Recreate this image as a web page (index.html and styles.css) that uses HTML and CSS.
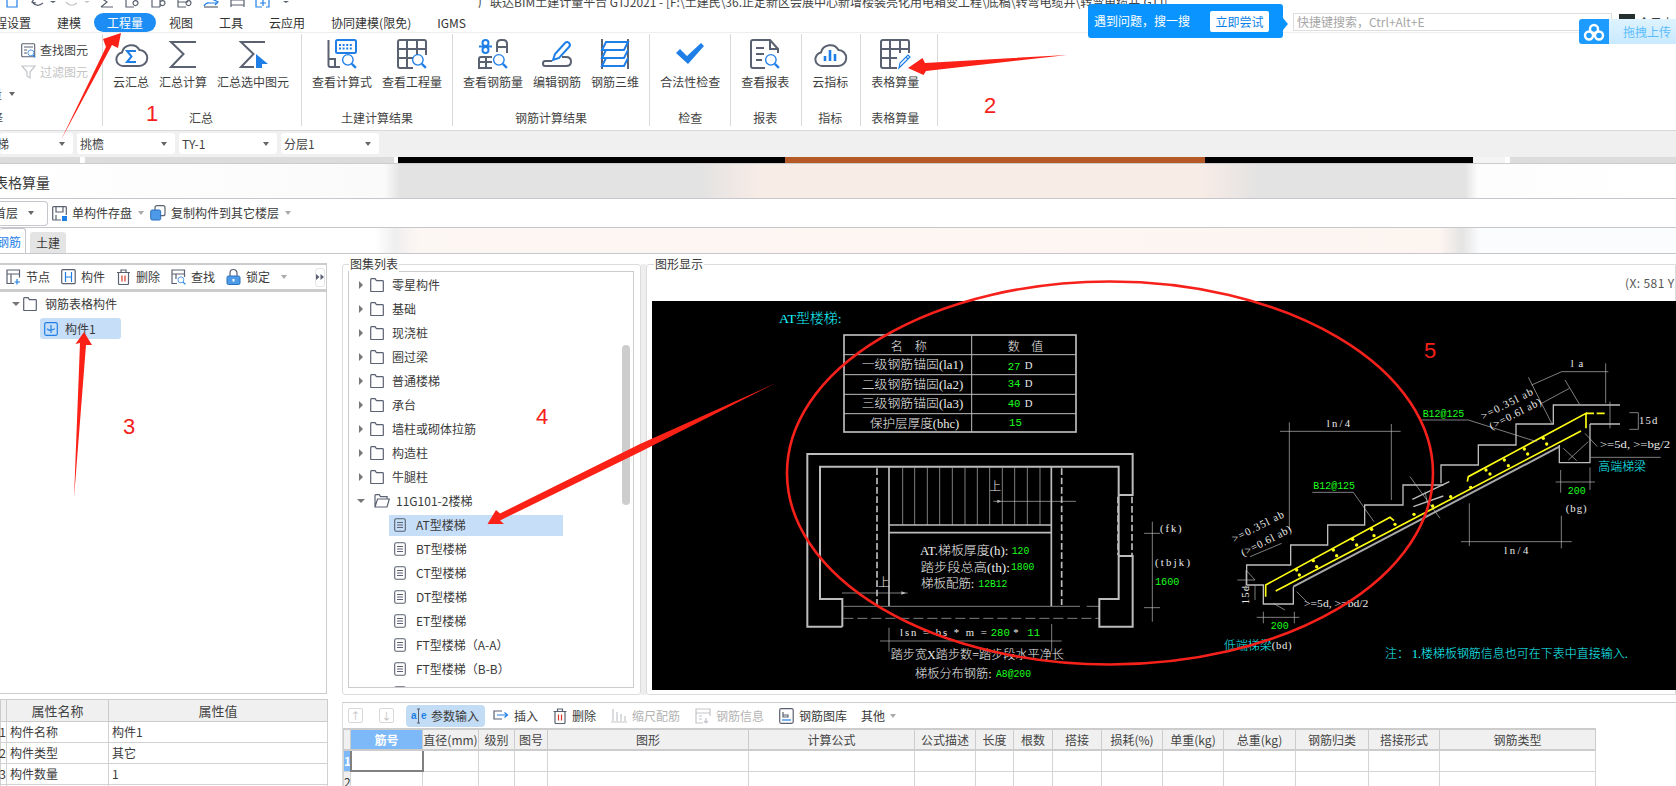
FILE: index.html
```html
<!DOCTYPE html>
<html lang="zh-CN">
<head>
<meta charset="utf-8">
<title>表格算量</title>
<link rel="stylesheet" href="styles.css">
</head>
<body>
<svg class="defs" width="0" height="0" aria-hidden="true">
  <symbol id="mag" viewBox="0 0 14 14"><circle cx="6" cy="6" r="4.6" class="b"/><path d="M9.5 9.5L13 13" class="b b2"/></symbol>
  <symbol id="folder" viewBox="0 0 14 14"><path d="M.7 13V1.5q0-.8.8-.8h3.6l1.3 2h6.1q.8 0 .8.8V13q0 .5-.8.5H1.5q-.8 0-.8-.5z" class="d"/></symbol>
  <symbol id="folderopen" viewBox="0 0 16 14"><path d="M1 13V1.5q0-.8.8-.8h3.4l1.3 2h6.6v2.2M1 13l2.5-8h11.8L13 13z" class="d"/></symbol>
  <symbol id="doc" viewBox="0 0 12 14"><rect x=".7" y=".7" width="10.6" height="12.6" rx="1.5" class="s"/><path d="M3 4.5h6M3 7h6M3 9.500h6" class="s"/></symbol>
  <symbol id="trash" viewBox="0 0 14 16"><path d="M2 4v10.500q0 1 1 1h8q1 0 1-1V4M.5 3.500h13M4.500 3.500V1h5v2.500" class="d"/><path d="M5.500 6.500v6M8.500 6.500v6" class="r"/></symbol>
</svg>

<header class="titlebar">
  <svg class="quick" width="290" height="13" viewBox="0 0 290 13">
    <path d="M7 -3v10h10v-10" class="b"/>
    <path d="M32 2q5 6 11 1M34 -1l-2 3 4 1" class="d"/><path d="M50 1l3 2 3-2z" class="fill-d"/>
    <path d="M66 2q5 6 11 1" class="lt"/><path d="M84 1l3 2 3-2z" class="fill-l"/>
    <path d="M101 7l6-5-6-4M101 7h12" class="d"/>
    <path d="M126 -3v10h8M138 3a2.500 2.500 0 1 0 0 .1" class="d"/>
    <path d="M152 -3v10h8M160 -3v10M165 3a2.500 2.500 0 1 0 0 .1" class="d"/>
    <path d="M178 -3v10h8M178 2h10M191 3a2.500 2.500 0 1 0 0 .1" class="d"/>
    <path d="M204 6q2-4 6-3h8M212 -1l6 3-3 3" class="b"/><path d="M204 7h14" class="d"/>
    <path d="M231 -3v10M244 -3v10M231 0h13M231 5h13" class="d"/>
    <path d="M256 -3v10h6M269 -3v10h-3M260 3h6M263 0v6" class="b"/>
    <path d="M283 1l3 2 3-2z" class="fill-d"/>
  </svg>
  <span class="apptitle">广联达BIM土建计量平台 GTJ2021 - [F:\土建民\36.正定新区会展中心新增楼装亮化用电箱变工程\底稿\转弯电缆井\转弯电缆井.GTJ]</span>
</header>

<nav class="tabs">
  <span class="tab">工程设置</span>
  <span class="tab">建模</span>
  <span class="tab tab-on">工程量</span>
  <span class="tab">视图</span>
  <span class="tab">工具</span>
  <span class="tab">云应用</span>
  <span class="tab">协同建模(限免)</span>
  <span class="tab">IGMS</span>
  <div class="searchbox">快捷键搜索，Ctrl+Alt+E</div>
  <div class="avatar"></div>
  <span class="username">今日上线</span>
</nav>

<section class="ribbon">
  <div class="group group-left">
    <div class="mini"><svg width="15" height="15" viewBox="0 0 15 15"><rect x=".7" y=".7" width="13" height="13" class="s" rx="1"/><path d="M3 4h9M3 7h3M3 10h3" class="s"/><use href="#mag" x="6" y="6" width="9" height="9"/></svg>查找图元</div>
    <div class="mini mini-off"><svg width="15" height="15" viewBox="0 0 15 15"><path d="M1 1h13L9 7v6l-3-2V7z" class="lt"/></svg>过滤图元</div>
    <div class="mini mini-cut">批量<i class="caret"></i></div>
    <div class="grouplabel left-label">选择</div>
  </div>

  <div class="group group-sum">
    <div class="items">
      <div class="item"><svg width="32" height="30" viewBox="0 0 32 30"><path d="M8 27a6.800 6.800 0 0 1-1-13.500A9.500 9.500 0 0 1 24.500 11 8 8 0 0 1 24 27z" class="d d2"/><path d="M21 12h-9l4.500 5.500L12 23h9" class="b b2"/></svg><span>云汇总</span></div>
      <div class="item"><svg width="30" height="30" viewBox="0 0 30 30"><path d="M28 3H3l12.500 12L3 28h25" class="d d2"/></svg><span>汇总计算</span></div>
      <div class="item"><svg width="30" height="30" viewBox="0 0 30 30"><path d="M27 3H3l12.500 12L3 28h13" class="d d2"/><path d="M18 15l12 10H18z" class="fill-b"/><path d="M18 25h6v4h-6z" class="fill-b"/></svg><span>汇总选中图元</span></div>
    </div>
    <div class="grouplabel">汇总</div>
  </div>

  <div class="group">
    <div class="items">
      <div class="item"><svg width="30" height="30" viewBox="0 0 30 30"><path d="M1.500 1v25q0 2 2 2H13M1.500 20H8v8" class="d d2"/><rect x="9" y="1" width="20" height="13" rx="1.500" class="b b2"/><path d="M12 6h14M12 9.500h14" class="b b2 dots"/><use href="#mag" x="14" y="14" width="16" height="16"/></svg><span>查看计算式</span></div>
      <div class="item"><svg width="30" height="30" viewBox="0 0 30 30"><path d="M16 29H3q-2 0-2-2V3q0-2 2-2h24q2 0 2 2v13M1 10h28M1 19h15M10 1v28M20 1v15" class="d d2"/><use href="#mag" x="14" y="14" width="16" height="16"/></svg><span>查看工程量</span></div>
    </div>
    <div class="grouplabel">土建计算结果</div>
  </div>

  <div class="group">
    <div class="items">
      <div class="item"><svg width="30" height="30" viewBox="0 0 30 30"><circle cx="7.500" cy="4" r="3" class="b b2"/><circle cx="7.500" cy="11" r="3" class="b b2"/><path d="M1 7.500h13" class="b b2"/><path d="M19 13V5q0-4 4-4h2q4 0 4 4v9M19 8h10M14 18H3q-2 0-2 2v9h13M1 23h13M8 18v11" class="d d2"/><use href="#mag" x="14" y="14" width="16" height="16"/></svg><span>查看钢筋量</span></div>
      <div class="item"><svg width="30" height="30" viewBox="0 0 30 30"><path d="M20 18h4q5 0 5 4.500T24 27H3q-2 0-2-2.500T3 22h7" class="d d2"/><path d="M11 21l2-6L23 4q2-2 4 0t0 4L17 19z" class="b b2"/></svg><span>编辑钢筋</span></div>
      <div class="item"><svg width="30" height="30" viewBox="0 0 30 30"><path d="M2 0v30M28 0v30" class="d d2"/><path d="M6 3H28L24 11H2zM6 11L2 19H24L28 11M6 19L2 27H24L28 19" class="b b2"/></svg><span>钢筋三维</span></div>
    </div>
    <div class="grouplabel">钢筋计算结果</div>
  </div>

  <div class="group">
    <div class="items">
      <div class="item"><svg width="30" height="30" viewBox="0 0 30 30"><path d="M1 14l4-4 7 7L26 4l3 3-16 18z" class="fill-b"/></svg><span>合法性检查</span></div>
    </div>
    <div class="grouplabel">检查</div>
  </div>

  <div class="group group-report">
    <div class="items">
      <div class="item"><svg width="30" height="30" viewBox="0 0 30 30"><path d="M15 29H3q-2 0-2-2V3q0-2 2-2h17l8 9v4M20 1v9h8M6 9h8M6 15h8M6 21h6" class="d d2"/><use href="#mag" x="14" y="14" width="16" height="16"/></svg><span>查看报表</span></div>
    </div>
    <div class="grouplabel">报表</div>
  </div>

  <div class="group group-idx">
    <div class="items">
      <div class="item"><svg width="32" height="30" viewBox="0 0 32 30"><path d="M8 27a6.800 6.800 0 0 1-1-13.500A9.500 9.500 0 0 1 24.500 11 8 8 0 0 1 24 27z" class="d d2"/><path d="M11 17v5M16 11v11M21 15v7" class="b b3"/></svg><span>云指标</span></div>
    </div>
    <div class="grouplabel">指标</div>
  </div>

  <div class="group group-table">
    <div class="items">
      <div class="item"><svg width="30" height="30" viewBox="0 0 30 30"><path d="M17 29H3q-2 0-2-2V3q0-2 2-2h24q2 0 2 2v11M1 10h28M1 19h16M10 1v28M20 1v13" class="d d2"/><path d="M19 29l1-5 8-8 2 2-8 8zM26 18l2 2" class="b"/></svg><span>表格算量</span></div>
    </div>
    <div class="grouplabel">表格算量</div>
  </div>
</section>

<section class="selectors">
  <div class="select select-first"><span>楼梯</span><i class="caret"></i></div>
  <div class="select"><span>挑檐</span><i class="caret"></i></div>
  <div class="select"><span>TY-1</span><i class="caret"></i></div>
  <div class="select"><span>分层1</span><i class="caret"></i></div>
</section>
<div class="sliver"></div>

<section class="dialog-title"><span>表格算量</span></section>

<section class="dialog-tools">
  <div class="combo"><span>首层</span><i class="caret"></i></div>
  <div class="tool"><svg width="15" height="15" viewBox="0 0 15 15"><path d="M9 14H1.500q-.8 0-.8-.8V1.500q0-.8.8-.8h12q.8 0 .8.8V9M4 1v5h7V1M4 14V9" class="d"/><rect x="10" y="10" width="5" height="5" class="fill-b"/></svg>单构件存盘<i class="caret"></i></div>
  <div class="tool"><svg width="16" height="16" viewBox="0 0 16 16"><rect x="5" y=".7" width="10" height="10" rx="2" class="d"/><rect x=".7" y="5" width="10" height="10" rx="1.500" class="fill-blue-soft"/></svg>复制构件到其它楼层<i class="caret"></i></div>
</section>

<section class="dialog-tabs">
  <span class="dtab dtab-on">钢筋</span>
  <span class="dtab">土建</span>
</section>

<main class="main">
  <aside class="leftcol">
    <div class="treepanel">
      <div class="treetools">
        <div class="ttool"><svg width="15" height="16" viewBox="0 0 15 16"><path d="M8 14.500H1V1h12.500v7.500M1 5h12M5 5v9" class="d"/><path d="M11 10v5.500M8.500 13h5.500" class="b"/></svg>节点</div>
        <div class="ttool"><svg width="15" height="16" viewBox="0 0 15 16"><rect x=".7" y=".7" width="13.500" height="14" rx="1" class="d"/><path d="M4.500 3v10M10.500 3v10M4.500 8h6" class="b"/></svg>构件</div>
        <div class="ttool"><svg width="15" height="16" viewBox="0 0 14 16"><use href="#trash" width="14" height="16"/></svg>删除</div>
        <div class="ttool"><svg width="15" height="16" viewBox="0 0 15 16"><path d="M6 14.500H1V1h12.500v7M1 5h12M5 5v5" class="d"/><use href="#mag" x="6" y="7" width="9" height="9"/></svg>查找</div>
        <div class="ttool"><svg width="15" height="16" viewBox="0 0 15 16"><path d="M4 7V4a3.500 3.500 0 0 1 7 0v3" class="d"/><rect x="1" y="7" width="13" height="8.500" rx="1.500" class="fill-blue-soft"/><path d="M7.500 10v2.500" class="w"/></svg>锁定<i class="caret caret-lt"></i></div>
        <div class="collapse"><svg width="8" height="8" viewBox="0 0 8 8"><path d="M0 1l3.500 3L0 7zM4.500 1L8 4 4.500 7z" class="fill-d"/></svg></div>
      </div>
      <div class="treeroot"><i class="tri-down"></i><svg width="14" height="14"><use href="#folder"/></svg><span>钢筋表格构件</span></div>
      <div class="treeleaf"><svg width="14" height="14" viewBox="0 0 14 14"><rect x=".7" y=".7" width="12.600" height="12.600" rx="1.500" class="b"/><path d="M7 3v8M3.500 6.500q0 2 3.500 1.500t3.500-1.500" class="b"/></svg><span>构件1</span></div>
    </div>
    <table class="props">
      <colgroup><col class="pc1"><col class="pc2"><col class="pc3"></colgroup>
      <thead><tr><th></th><th>属性名称</th><th>属性值</th></tr></thead>
      <tbody>
        <tr><td class="num">1</td><td>构件名称</td><td>构件1</td></tr>
        <tr><td class="num">2</td><td>构件类型</td><td>其它</td></tr>
        <tr><td class="num">3</td><td>构件数量</td><td>1</td></tr>
        <tr><td class="num"></td><td></td><td></td></tr>
      </tbody>
    </table>
  </aside>

  <div class="rightcol">
    <div class="upper">
      <section class="atlas">
        <span class="legend">图集列表</span>
        <div class="atlaslist">
          <div class="frow"><i class="tri-right"></i><svg width="14" height="14"><use href="#folder"/></svg><span>零星构件</span></div>
          <div class="frow"><i class="tri-right"></i><svg width="14" height="14"><use href="#folder"/></svg><span>基础</span></div>
          <div class="frow"><i class="tri-right"></i><svg width="14" height="14"><use href="#folder"/></svg><span>现浇桩</span></div>
          <div class="frow"><i class="tri-right"></i><svg width="14" height="14"><use href="#folder"/></svg><span>圈过梁</span></div>
          <div class="frow"><i class="tri-right"></i><svg width="14" height="14"><use href="#folder"/></svg><span>普通楼梯</span></div>
          <div class="frow"><i class="tri-right"></i><svg width="14" height="14"><use href="#folder"/></svg><span>承台</span></div>
          <div class="frow"><i class="tri-right"></i><svg width="14" height="14"><use href="#folder"/></svg><span>墙柱或砌体拉筋</span></div>
          <div class="frow"><i class="tri-right"></i><svg width="14" height="14"><use href="#folder"/></svg><span>构造柱</span></div>
          <div class="frow"><i class="tri-right"></i><svg width="14" height="14"><use href="#folder"/></svg><span>牛腿柱</span></div>
          <div class="frow"><i class="tri-down"></i><svg width="16" height="14"><use href="#folderopen"/></svg><span class="open-label">11G101-2楼梯</span></div>
          <div class="drow drow-on"><svg width="12" height="14"><use href="#doc"/></svg><span>AT型楼梯</span></div>
          <div class="drow"><svg width="12" height="14"><use href="#doc"/></svg><span>BT型楼梯</span></div>
          <div class="drow"><svg width="12" height="14"><use href="#doc"/></svg><span>CT型楼梯</span></div>
          <div class="drow"><svg width="12" height="14"><use href="#doc"/></svg><span>DT型楼梯</span></div>
          <div class="drow"><svg width="12" height="14"><use href="#doc"/></svg><span>ET型楼梯</span></div>
          <div class="drow"><svg width="12" height="14"><use href="#doc"/></svg><span>FT型楼梯（A-A）</span></div>
          <div class="drow"><svg width="12" height="14"><use href="#doc"/></svg><span>FT型楼梯（B-B）</span></div>
          <div class="drow"><svg width="12" height="14"><use href="#doc"/></svg></div>
          <div class="vscroll"></div>
        </div>
      </section>

      <section class="figure">
        <span class="legend">图形显示</span>
        <div class="status">(X: 581 Y: 263)</div>
        <svg class="cad" width="1024" height="389" viewBox="652 301 1024 389">
          <g transform="translate(640 270) scale(.33333)">
            <text x="417" y="145" class="t c s40" textLength="188" lengthAdjust="spacingAndGlyphs">AT型楼梯:</text>
            <rect x="612" y="195" width="696" height="291" class="l l5"/>
            <path d="M995 195V486M612 254H1308M612 314H1308M612 373H1308M612 431H1308" class="l l3"/>
            <text x="752" y="232" class="t w36" textLength="108" lengthAdjust="spacing">名 称</text>
            <text x="1103" y="230" class="t w36" textLength="107" lengthAdjust="spacing">数 值</text>
            <text x="665" y="285" class="t w36" textLength="305" lengthAdjust="spacingAndGlyphs">一级钢筋锚固(la1)</text>
            <text x="665" y="344" class="t w36" textLength="305" lengthAdjust="spacingAndGlyphs">二级钢筋锚固(la2)</text>
            <text x="665" y="402" class="t w36" textLength="305" lengthAdjust="spacingAndGlyphs">三级钢筋锚固(la3)</text>
            <text x="690" y="461" class="t w36" textLength="268" lengthAdjust="spacingAndGlyphs">保护层厚度(bhc)</text>
            <text x="1103" y="290" class="t g s32">27</text><text x="1154" y="288" class="t w30">D</text>
            <text x="1103" y="342" class="t g s32">34</text><text x="1154" y="342" class="t w30">D</text>
            <text x="1103" y="402" class="t g s32">40</text><text x="1154" y="402" class="t w30">D</text>
            <text x="1107" y="460" class="t g s32">15</text>

            <path d="M607 1070H502V552H1478V675H1436M607 1070V987H540V590H1436V987H1378V1070H1478V858H1436" class="l l6"/>
            <path d="M1434 680V855M1476 680V855M711 595V1005M1265 595V1005" class="l l5 dash"/>
            <path d="M747 590V1008M1234 590V1008M747 765H1234M747 788H1234" class="l l5"/>
            <path d="M788 593V765M824 593V765M862 593V765M899 593V765M937 593V765M975 593V765M1012 593V765M1049 593V765M1087 593V765M1124 593V765M1162 593V765M1200 593V765" class="l l2"/>
            <path d="M610 1009H1320M1340 1009H1378M1060 694H1308M606 969H803M720 1113H1265M747 1073V1145M1235 1062V1145M1537 755V1055M1512 790H1560M1512 1013H1560" class="l l2"/>
            <path d="M610 1045H1378" class="l l2 dash2"/>
            <path d="M1072 689V699L1084 694zM784 964V974L798 969z" class="solid"/>
            <text x="1048" y="652" class="t w36">上</text>
            <text x="713" y="938" class="t w36">上</text>
            <text x="780" y="1087" class="t w30" textLength="260" lengthAdjust="spacing">lsn = bs * m =</text>
            <text x="1052" y="1089" class="t g s32">280</text><text x="1120" y="1089" class="t w30">*</text><text x="1162" y="1089" class="t g s32">11</text>
            <text x="752" y="1155" class="t w36" textLength="520" lengthAdjust="spacingAndGlyphs">踏步宽X踏步数=踏步段水平净长</text>
            <text x="825" y="1212" class="t w36" textLength="230" lengthAdjust="spacingAndGlyphs">梯板分布钢筋:</text>
            <text x="1068" y="1212" class="t g s32" textLength="105" lengthAdjust="spacingAndGlyphs">A8@200</text>
            <text x="840" y="843" class="t w36" textLength="265" lengthAdjust="spacingAndGlyphs">AT.梯板厚度(h):</text>
            <text x="1115" y="843" class="t g s32" textLength="53" lengthAdjust="spacingAndGlyphs">120</text>
            <text x="842" y="893" class="t w36" textLength="268" lengthAdjust="spacingAndGlyphs">踏步段总高(th):</text>
            <text x="1113" y="891" class="t g s32" textLength="70" lengthAdjust="spacingAndGlyphs">1800</text>
            <text x="843" y="942" class="t w36" textLength="160" lengthAdjust="spacingAndGlyphs">梯板配筋:</text>
            <text x="1015" y="942" class="t g s32" textLength="87" lengthAdjust="spacingAndGlyphs">12B12</text>
          </g>
          <g transform="translate(1160 270) scale(.33333)">
            <path d="M260 945V885H392V825H503V765H614V705H729V645H850M843 640V585H955V525H1068V462H1180V405H1380M1290 462H1380M1198 525V578H1290V462M260 945H310V1002H400V950" class="l l4"/>
            <path d="M400 950L1198 530" class="l l6 soft"/>
            <path d="M757 688L868 635M760 710L850 678" class="l l4"/>
            <path d="M750 620L840 745M795 665L805 710" class="l l2"/>
            <path d="M317 980V945L690 742L702 752M347 963L1263 483M922 635L925 620L1278 430V475" class="y"/>
            <path d="M1278 430H1340" class="y ydash"/>
            <g class="dots-y">
              <circle cx="410" cy="900" r="5"/><circle cx="460" cy="872" r="5"/><circle cx="520" cy="840" r="5"/><circle cx="578" cy="808" r="5"/><circle cx="635" cy="778" r="5"/>
              <circle cx="418" cy="915" r="5"/><circle cx="470" cy="890" r="5"/><circle cx="530" cy="857" r="5"/><circle cx="590" cy="825" r="5"/><circle cx="642" cy="797" r="5"/><circle cx="705" cy="763" r="5"/><circle cx="762" cy="733" r="5"/><circle cx="818" cy="708" r="5"/><circle cx="872" cy="680" r="5"/><circle cx="932" cy="652" r="5"/>
              <circle cx="978" cy="600" r="5"/><circle cx="1033" cy="570" r="5"/><circle cx="1093" cy="537" r="5"/><circle cx="1150" cy="505" r="5"/><circle cx="990" cy="612" r="5"/><circle cx="1045" cy="587" r="5"/><circle cx="1103" cy="552" r="5"/><circle cx="1160" cy="522" r="5"/>
            </g>
            <path d="M457 667H580L642 755M785 450H925L1130 515M360 484H722M388 457V780M694 462V690M903 815H1235M928 700V828M1204 737V835M1115 345L1205 305H1345M1337 280V400M1145 400L1228 355M1105 322L1175 460M1215 330L1258 402M1408 428H1435V478H1408M1350 395V475M1292 562H1502M1187 636H1305M1202 600V668M1290 592V660M290 1042H418M310 1025V1060M403 1025V1060M270 860L365 820M232 930H285L258 900V960M285 945V990M410 965L440 995M340 1000L375 1020M1210 535L1250 572M1225 570L1285 515M1275 490L1312 530" class="l l2"/>
            <text x="460" y="648" class="t g s32" textLength="125" lengthAdjust="spacingAndGlyphs">B12@125</text>
            <text x="788" y="432" class="t g s32" textLength="125" lengthAdjust="spacingAndGlyphs">B12@125</text>
            <text x="500" y="462" class="t w30" textLength="70" lengthAdjust="spacing">ln/4</text>
            <text x="1033" y="843" class="t w30" textLength="72" lengthAdjust="spacing">ln/4</text>
            <text x="1232" y="280" class="t w30" textLength="38" lengthAdjust="spacing">la</text>
            <text x="1437" y="453" class="t w30" textLength="55" lengthAdjust="spacing">15d</text>
            <text x="965" y="440" class="t w30" transform="rotate(-27 965 440)" textLength="170" lengthAdjust="spacing">&gt;=0.35l ab</text>
            <text x="990" y="470" class="t w30" transform="rotate(-27 990 470)" textLength="170" lengthAdjust="spacing">(&gt;=0.6l ab)</text>
            <text x="218" y="808" class="t w30" transform="rotate(-27 218 808)" textLength="170" lengthAdjust="spacing">&gt;=0.35l ab</text>
            <text x="245" y="850" class="t w30" transform="rotate(-27 245 850)" textLength="165" lengthAdjust="spacing">(&gt;=0.6l ab)</text>
            <text x="1320" y="525" class="t w30" textLength="210" lengthAdjust="spacingAndGlyphs">&gt;=5d, &gt;=bg/2</text>
            <text x="1315" y="592" class="t c w36" textLength="143" lengthAdjust="spacingAndGlyphs">高端梯梁</text>
            <text x="1223" y="663" class="t g s32" textLength="54" lengthAdjust="spacingAndGlyphs">200</text>
            <text x="1217" y="715" class="t w30" textLength="63" lengthAdjust="spacing">(bg)</text>
            <text x="432" y="1002" class="t w30" textLength="193" lengthAdjust="spacingAndGlyphs">&gt;=5d, &gt;=bd/2</text>
            <text x="258" y="1003" class="t w30" transform="rotate(-90 258 1003)" textLength="55" lengthAdjust="spacing">15d</text>
            <text x="332" y="1068" class="t g s32" textLength="54" lengthAdjust="spacingAndGlyphs">200</text>
            <text x="192" y="1128" class="t c w36" textLength="143" lengthAdjust="spacingAndGlyphs">低端梯梁</text>
            <text x="335" y="1127" class="t w30" textLength="60" lengthAdjust="spacing">(bd)</text>
            <text x="675" y="1153" class="t c w36" textLength="728" lengthAdjust="spacingAndGlyphs">注： 1.楼梯板钢筋信息也可在下表中直接输入.</text>
            <text x="0" y="775" class="t w30" textLength="65" lengthAdjust="spacing">(fk)</text>
            <text x="-15" y="878" class="t w30" textLength="105" lengthAdjust="spacing">(tbjk)</text>
            <text x="-15" y="936" class="t g s32" textLength="73" lengthAdjust="spacingAndGlyphs">1600</text>
          </g>
        </svg>
      </section>
    </div>

    <section class="bottom">
      <div class="btools">
        <div class="arrowbtn">↑</div>
        <div class="arrowbtn arrowbtn-gap">↓</div>
        <div class="btool btool-on"><svg width="16" height="16" viewBox="0 0 16 16"><path d="M6 1h3M6 15h3M7.500 1v14" class="d thin"/><text x="0" y="11" class="glyph">a</text><text x="10" y="11" class="glyph">e</text></svg>参数输入</div>
        <div class="btool"><svg width="16" height="16" viewBox="0 0 16 16"><path d="M9 3H1v8h8" class="d"/><path d="M4 7h10M11.500 4.500L14.500 7l-3 2.500" class="b"/></svg>插入</div>
        <div class="btool"><svg width="14" height="16" viewBox="0 0 14 16"><use href="#trash" width="14" height="16"/></svg>删除</div>
        <div class="btool btool-off"><svg width="16" height="16" viewBox="0 0 16 16"><path d="M2 1v12M6 4v9M10 6v7M14 8v5M0 14h16" class="lt"/></svg>缩尺配筋</div>
        <div class="btool btool-off"><svg width="16" height="16" viewBox="0 0 16 16"><path d="M8 15H1V1h14v7M1 5h14M4 8h3M4 11h3" class="lt"/><path d="M11 10v5M9 13l2 2 2-2" class="lt"/></svg>钢筋信息</div>
        <div class="btool"><svg width="15" height="16" viewBox="0 0 15 16"><rect x=".7" y=".7" width="13.500" height="14.600" rx="1.500" class="d"/><path d="M4 4v5h5V7H4" class="d"/><path d="M3 12h9" class="b"/></svg>钢筋图库</div>
        <div class="btool btool-last">其他<i class="caret caret-lt"></i></div>
      </div>
      <table class="grid">
        <colgroup><col><col><col><col><col><col><col><col><col><col><col><col><col><col><col><col><col></colgroup>
        <thead>
          <tr><th class="corner"></th><th class="th-on">筋号</th><th>直径(mm)</th><th>级别</th><th>图号</th><th>图形</th><th>计算公式</th><th>公式描述</th><th>长度</th><th>根数</th><th>搭接</th><th>损耗(%)</th><th>单重(kg)</th><th>总重(kg)</th><th>钢筋归类</th><th>搭接形式</th><th>钢筋类型</th></tr>
        </thead>
        <tbody>
          <tr><td class="rh rh-on">1</td><td class="cell-on"></td><td></td><td></td><td></td><td></td><td></td><td></td><td></td><td></td><td></td><td></td><td></td><td></td><td></td><td></td><td></td></tr>
          <tr><td class="rh">2</td><td></td><td></td><td></td><td></td><td></td><td></td><td></td><td></td><td></td><td></td><td></td><td></td><td></td><td></td><td></td><td></td></tr>
        </tbody>
      </table>
    </section>
  </div>
</main>

<aside class="popup"><span>遇到问题，搜一搜</span><span class="try">立即尝试</span></aside>
<aside class="upload">
  <div class="upload-icon"><svg width="20" height="18" viewBox="0 0 20 18"><circle cx="10" cy="6" r="4" class="wr"/><circle cx="5" cy="12.500" r="4" class="wr"/><circle cx="15" cy="12.500" r="4" class="wr"/></svg></div>
  <div class="upload-text">拖拽上传</div>
</aside>

<svg class="marks" width="1676" height="786" viewBox="0 0 1676 786">
  <ellipse cx="1110" cy="473" rx="323" ry="191.500" class="ring"/>
  <polygon points="61,140 106,47 103,39 121,33 118,48 112,45" class="arrow"/>
  <polygon points="1067,55 925,63 922.500,58 908,68 923.500,75 926,71" class="arrow"/>
  <polygon points="74,498 80,343 75.500,344 84,332 92,345 86,345" class="arrow"/>
  <polygon points="776,383 640,444 500,513.500 496,510 487.500,524 504,524 500,520.500 640,452" class="arrow"/>
  <text x="152" y="113" class="mark">1</text>
  <text x="990" y="105" class="mark">2</text>
  <text x="129" y="426" class="mark">3</text>
  <text x="542" y="416" class="mark">4</text>
  <text x="1430" y="350" class="mark">5</text>
</svg>
</body>
</html>
```

FILE: styles.css
```css
* { box-sizing: border-box; }
html, body { margin: 0; padding: 0; }
body {
  width: 1676px; height: 786px; overflow: hidden; position: relative;
  background: #fff; color: #3a3a3a;
  font: 12px/16px "Noto Sans CJK SC", "Liberation Sans", sans-serif;
}
.defs { position: absolute; }
svg { flex: none; display: block; overflow: visible; }

.d, .s, .b, .r, .lt, .w { fill: none; stroke-width: 1.2; }
.d { stroke: #5a6170; }
.d2 { stroke-width: 2; }
.s { stroke: #5a6170; stroke-width: 1.1; }
.b { stroke: #1f7fe6; }
.b2 { stroke-width: 2; }
.b3 { stroke-width: 2.600; }
.r { stroke: #d9362b; }
.lt { stroke: #c2c5ca; }
.w { stroke: #fff; stroke-width: 2; }
.wr { fill: none; stroke: #fff; stroke-width: 2.400; }
.dots { stroke-dasharray: 2 1.600; }
.fill-b { fill: #1f7fe6; }
.fill-d { fill: #5a6170; }
.fill-l { fill: #c2c5ca; }
.fill-blue-soft { fill: #4d9ae8; stroke: #2b6fb8; stroke-width: 1; }
.thin { stroke-width: 1; }
.glyph { font: bold 10px "Liberation Sans", sans-serif; fill: #1f7fe6; }

.caret { display: inline-block; width: 0; height: 0; margin-left: 6px; border: 3px solid transparent; border-top: 4px solid #666; border-bottom: 0; }
.caret-lt { border-top-color: #aaa; }
.tri-right { width: 0; height: 0; border: 4px solid transparent; border-left: 4px solid #777; border-right: 0; flex: none; }
.tri-down { width: 0; height: 0; border: 4px solid transparent; border-top: 4px solid #777; border-bottom: 0; flex: none; }

.titlebar { height: 13px; display: flex; overflow: hidden; position: relative; }
.apptitle { margin-left: 188px; margin-top: -6px; white-space: nowrap; line-height: 16px; color: #444; }

.tabs { height: 19px; display: flex; align-items: center; margin-left: -30px; line-height: 19px; position: relative; }
.tab { padding: 0 13px; white-space: nowrap; color: #333; height: 19px; }
.tab-on { background: #1c8df5; color: #fff; border-radius: 10px; }
.searchbox { width: 319px; height: 18px; border: 1px solid #dedede; color: #a6a6a6; padding-left: 3px; line-height: 16px; margin-left: auto; margin-right: 7px; margin-top: -1px; }
.avatar { width: 16px; height: 17px; background: #24302f; margin-top: -1px; flex: none; margin-right: 3px; }
.username { white-space: nowrap; width: 39px; margin-right: -1px; overflow: hidden; }

.ribbon { height: 99px; display: flex; border-bottom: 1px solid #d9d9d9; padding-bottom: 4px; border-top: 1px solid #eee; }
.group { display: flex; flex-direction: column; padding: 2px 10px 0; border-left: 1px solid #d9d9d9; margin-top: 1px; }
.group-left { width: 102px; border-left: 0; padding: 5px 0 0 21px; position: relative; }
.group-sum { padding-right: 12px; }
.group-report { padding-right: 12px; }
.group-idx { padding-right: 12px; }
.group-table { padding-right: 18px; border-right: 1px solid #d9d9d9; }
.items { display: flex; gap: 10px; }
.item { display: flex; flex-direction: column; align-items: center; gap: 5px; padding-top: 3px; white-space: nowrap; color: #3f3f3f; }
.grouplabel { margin-top: auto; text-align: center; line-height: 16px; color: #444; }
.mini { display: flex; align-items: center; gap: 4px; height: 22px; white-space: nowrap; color: #444; }
.mini-off { color: #c4c4c4; }
.mini-cut { margin-left: -43px; color: #555; }
.mini-cut .caret { margin-left: 3px; }
.left-label { position: absolute; left: -21px; bottom: 0; }

.selectors { height: 26px; background: #f0f0f0; display: flex; gap: 4px; padding-top: 2px; }
.select { height: 21px; width: 98px; background: #fff; border-radius: 3px; display: flex; align-items: center; padding: 0 5px 0 3px; color: #444; }
.select span { flex: 1; }
.select .caret { margin: 0 3px 0 0; }
.select-first { width: 73px; }
.select-first span { margin-left: -18px; }
.sliver { height: 6px; background: linear-gradient(90deg, #dcdcdc 0 80px, #fff 80px 85px, #dcdcdc 85px 394px, #fff 394px 398px, #000 398px 785px, #b55a27 785px 1205px, #000 1205px 1473px, #f4f4f4 1473px 1505px, #fff 1505px 1510px, #dcdcdc 1510px); }

.dialog-title { height: 36px; padding-left: 0; line-height: 36px; font-size: 14px; border-bottom: 1px solid #c6c6cc; border-top: 1px solid #ccc; white-space: nowrap;
  background: linear-gradient(90deg, #fff 0, #fafafa 385px, #e3e3e3 400px, #e3e3e3 700px, #f8ece6 760px, #f8ece6 1200px, #e3e3e3 1260px, #e3e3e3 1465px, #fdfdfd 1478px, #fff); }
.dialog-title span { margin-left: -6px; display: inline-block; }

.dialog-tools { height: 29px; display: flex; align-items: center; border-bottom: 1px solid #c6c6cc; white-space: nowrap; }
.combo { width: 48px; height: 25px; border: 1px solid #c6c6cc; border-left: 0; border-radius: 0 4px 4px 0; display: flex; align-items: center; flex: none; margin-right: 4px; }
.combo span { margin-left: -6px; flex: none; }
.combo .caret { margin-left: 10px; }
.tool { display: flex; align-items: center; gap: 5px; margin-right: 6px; }
.tool .caret { margin-left: 1px; border-top-color: #aaa; }

.dialog-tabs { height: 26px; display: flex; gap: 4px; align-items: flex-end; border-bottom: 1px solid #c6c6cc;
  background: linear-gradient(90deg, #fff 0, #fff 375px, #efefef 395px, #fdf7f3 420px, #fdf5f0 1440px, #e4e4e4 1462px, #fbfcfd 1480px); }
.dtab { height: 21px; padding: 0 6px; line-height: 21px; background: #e4e4e4; border-radius: 3px 3px 0 0; }
.dtab-on { height: 25px; line-height: 25px; width: 26px; padding: 0; background: #fff; color: #1f7fe6; border: 1px solid #c6c6cc; border-bottom: 0; border-left: 0; text-indent: -3px; white-space: nowrap; }

.main { display: flex; height: 533px; overflow: hidden; padding-top: 10px; }
.leftcol { width: 327px; margin-right: 15px; margin-top: -1px; display: flex; flex-direction: column; flex: none; }
.treepanel { height: 431px; flex: none; border-top: 2px solid #ccc; border-right: 1px solid #ccc; border-bottom: 1px solid #ccc; }
.treetools { display: flex; align-items: center; gap: 11px; padding-left: 6px; border-bottom: 3px solid #ccc; height: 27px; }
.ttool { display: flex; align-items: center; gap: 5px; white-space: nowrap; }
.collapse { margin-left: auto; margin-right: 1px; width: 10px; height: 19px; border: 1px solid #e5e5e5; border-radius: 3px; display: flex; align-items: center; justify-content: center; }
.treeroot { height: 24px; display: flex; align-items: center; padding-left: 12px; }
.treeroot svg { margin-left: 3px; }
.treeroot span { margin-left: 8px; }
.treeleaf { height: 21px; width: 81px; margin-left: 40px; background: #c6def8; border-radius: 3px; display: flex; align-items: center; padding-left: 4px; gap: 7px; margin-top: 2px; }

.props { margin-top: 5px; width: 327px; table-layout: fixed; border-collapse: collapse; border-right: 1px solid #ccc; flex: none; }
.pc1 { width: 6px; } .pc2 { width: 102px; } .pc3 { width: 219px; }
.props th { height: 22px; font-weight: 400; background: #f0f0f0; border: 1px solid #ccc; padding: 0; font-size: 13px; color: #444; }
.props td { height: 21px; border: 1px solid #d2d2d2; padding: 0 3px; white-space: nowrap; overflow: hidden; }
.props td.num { padding: 0; text-align: right; overflow: visible; font-size: 12px; direction: rtl; }

.rightcol { flex: 1; min-width: 0; display: flex; flex-direction: column; gap: 7px; }
.upper { height: 431px; display: flex; gap: 5px; background: linear-gradient(90deg, #fff 299px, #eee 299px 304px, #fff 304px); flex: none; }
.legend { position: absolute; top: -9px; left: 6px; background: #fff; padding: 0 1px; line-height: 16px; z-index: 1; }
.figure .legend { left: 7px; }

.atlas { width: 299px; position: relative; border: 1px solid #dcdcdc; border-radius: 3px; background: #fff; flex: none; padding: 6px 6px 6px 5px; }
.atlaslist { height: 417px; border: 1px solid #ccc; overflow: hidden; padding-top: 1px; position: relative; }
.frow { height: 24px; display: flex; align-items: center; padding-left: 10px; }
.frow svg { margin-left: 7px; }
.frow span { margin-left: 8px; }
.frow .open-label { margin-left: 6px; }
.frow .tri-down { margin-left: -2px; margin-right: 2px; }
.drow { height: 24px; width: 174px; margin-left: 40px; display: flex; align-items: center; padding-left: 5px; gap: 10px; white-space: nowrap; }
.drow-on { background: linear-gradient(#fff 0 2px, #c6def8 2px 23px, #fff 23px); }
.vscroll { position: absolute; top: 73px; left: 273px; width: 8px; height: 160px; background: #cdcdcd; border-radius: 4px; }

.figure { flex: 1; position: relative; border: 1px solid #dcdcdc; border-radius: 3px 0 0 3px; padding-left: 5px; background: #fff; min-width: 0; overflow: visible; }
.status { height: 36px; padding: 10px 0 0 973px; white-space: nowrap; overflow: hidden; color: #555; letter-spacing: .4px; }
.cad { background: #000; }
.t { dominant-baseline: central; font-family: "Liberation Mono", "Noto Sans CJK SC", monospace; fill: #ececec; font-size: 34px; }
.w36 { font-size: 36px; font-family: "Liberation Serif", "Noto Sans CJK SC", serif; font-weight: 300; }
.s40 { font-size: 40px; font-family: "Liberation Serif", "Noto Sans CJK SC", serif; font-weight: 300; }
.w30 { font-size: 32px; font-family: "Liberation Serif", "Noto Sans CJK SC", serif; }
.s32 { font-size: 32px; }
.g { fill: #1cff1c; }
.c { fill: #19fbff; }
.l { fill: none; stroke: #bdbdbd; }
.l2 { stroke-width: 2; } .l3 { stroke-width: 3; } .l4 { stroke-width: 4; } .l5 { stroke-width: 5; } .l6 { stroke-width: 6; }
.dash { stroke-dasharray: 20 8; }
.dash2 { stroke-dasharray: 30 12; }
.soft { stroke: #a8a8a8; }
.solid { fill: #bdbdbd; }
.y { fill: none; stroke: #ffff14; stroke-width: 5; }
.ydash { stroke-dasharray: 24 8; }
.dots-y circle { fill: #ffff14; }

.bottom { border-top: 1px solid #ccc; border-left: 1px solid #ddd; flex: 1; min-height: 0; overflow: hidden; }
.btools { height: 25px; display: flex; align-items: center; gap: 15px; padding-left: 5px; white-space: nowrap; }
.arrowbtn { width: 15px; height: 15px; border: 1px solid #d8d8d8; border-radius: 2px; color: #c0c0c0; text-align: center; line-height: 13px; font-size: 10px; flex: none; }
.arrowbtn-gap { margin-left: 1px; margin-right: -3px; }
.btool { display: flex; align-items: center; gap: 5px; }
.btool-on { background: #c3dcf5; height: 22px; padding: 0 6px 0 5px; border-radius: 4px; margin-right: -7px; gap: 4px; }
.btool-off { color: #b4b4b4; }
.btool-last { margin-left: -1px; }
.btool .caret { margin-left: 0; }

.grid { width: 1252px; table-layout: fixed; border-collapse: collapse; border-top: 2px solid #ccc; }
.grid col:nth-child(1) { width: 7px; }
.grid col:nth-child(2) { width: 72px; }
.grid col:nth-child(3) { width: 56px; }
.grid col:nth-child(4) { width: 36px; }
.grid col:nth-child(5) { width: 33px; }
.grid col:nth-child(6) { width: 201px; }
.grid col:nth-child(7) { width: 166px; }
.grid col:nth-child(8) { width: 61px; }
.grid col:nth-child(9) { width: 38px; }
.grid col:nth-child(10) { width: 39px; }
.grid col:nth-child(11) { width: 49px; }
.grid col:nth-child(12) { width: 61px; }
.grid col:nth-child(13) { width: 61px; }
.grid col:nth-child(14) { width: 72px; }
.grid col:nth-child(15) { width: 73px; }
.grid col:nth-child(16) { width: 71px; }
.grid col:nth-child(17) { width: 156px; }
.grid th { height: 21px; padding: 0; font-weight: 400; background: #f0f0f0; border: 1px solid #ccc; border-bottom-width: 2px; white-space: nowrap; overflow: hidden; color: #444; }
.grid th.th-on { background: #7db9f9; color: #fff; font-weight: 700; }
.grid td { height: 21px; padding: 0; border: 1px solid #d4d4d4; }
.grid td.rh { background: #f0f0f0; font-size: 12px; text-align: center; overflow: hidden; }
.grid td.rh-on { background: #7db9f9; color: #fff; font-weight: 700; }
.grid td.cell-on { border: 2px solid #808080; }

.popup { position: absolute; left: 1088px; top: 4px; width: 195px; height: 34px; background: #0a94ff; border-radius: 3px; color: #fff; display: flex; align-items: center; padding-left: 6px; white-space: nowrap; }
.popup::after { content: ""; position: absolute; left: 195px; top: 14px; border: 6px solid transparent; border-left: 5px solid #0a94ff; border-right: 0; }
.try { margin-left: 20px; width: 59px; height: 21px; line-height: 21px; text-align: center; background: #fff; color: #0a7fe8; border-radius: 2px; }
.upload { position: absolute; left: 1579px; top: 19px; width: 97px; height: 25px; display: flex; border-radius: 3px 0 0 3px; overflow: hidden; }
.upload-icon { width: 30px; background: #1e9bff; display: flex; align-items: center; justify-content: center; flex: none; }
.upload-text { flex: 1; background: linear-gradient(#def3ff, #c9e9fe); color: #5cbdfc; padding-left: 14px; line-height: 25px; white-space: nowrap; }

.marks { position: absolute; left: 0; top: 0; pointer-events: none; }
.ring { fill: none; stroke: #f5211a; stroke-width: 2.600; }
.arrow { fill: #fb2116; }
.mark { fill: #f5211a; font: 22px "Liberation Sans", sans-serif; text-anchor: middle; dominant-baseline: central; }
```
